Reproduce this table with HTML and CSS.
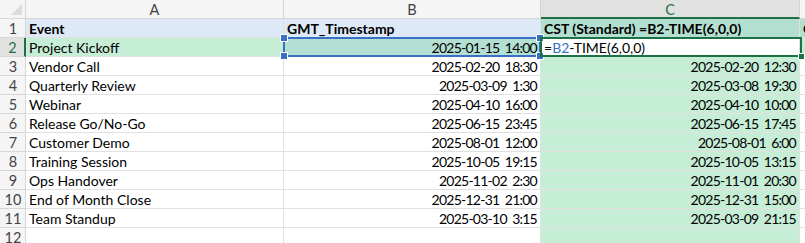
FILE: index.html
```html
<!DOCTYPE html>
<html>
<head>
<meta charset="utf-8">
<link rel="stylesheet" href="styles.css">
</head>
<body>
<div class="sheet">
  <div class="grid">
    <div class="hdr corner"><span class="tri"></span></div>
    <div class="hdr col">A</div>
    <div class="hdr col">B</div>
    <div class="hdr col col-sel">C</div>
    <div class="hdr col"></div>

    <div class="hdr row">1</div>
    <div class="cell b head-blue">Event</div>
    <div class="cell b head-blue">GMT_Timestamp</div>
    <div class="cell b head-teal">CST (Standard) =B2-TIME(6,0,0)</div>
    <div class="cell b head-teal">C</div>

    <div class="hdr row row-sel">2</div>
    <div class="cell green">Project Kickoff</div>
    <div class="cell r teal">2025-01-15 14:00</div>
    <div class="cell active"><span>=</span><span class="ref">B2</span><span>-TIME(6,0,0)</span></div>
    <div class="cell green"></div>

    <div class="hdr row">3</div>
    <div class="cell">Vendor Call</div>
    <div class="cell r">2025-02-20 18:30</div>
    <div class="cell r green">2025-02-20 12:30</div>
    <div class="cell"></div>

    <div class="hdr row">4</div>
    <div class="cell">Quarterly Review</div>
    <div class="cell r">2025-03-09 1:30</div>
    <div class="cell r green">2025-03-08 19:30</div>
    <div class="cell"></div>

    <div class="hdr row">5</div>
    <div class="cell">Webinar</div>
    <div class="cell r">2025-04-10 16:00</div>
    <div class="cell r green">2025-04-10 10:00</div>
    <div class="cell"></div>

    <div class="hdr row">6</div>
    <div class="cell">Release Go/No-Go</div>
    <div class="cell r">2025-06-15 23:45</div>
    <div class="cell r green">2025-06-15 17:45</div>
    <div class="cell"></div>

    <div class="hdr row">7</div>
    <div class="cell">Customer Demo</div>
    <div class="cell r">2025-08-01 12:00</div>
    <div class="cell r green">2025-08-01 6:00</div>
    <div class="cell"></div>

    <div class="hdr row">8</div>
    <div class="cell">Training Session</div>
    <div class="cell r">2025-10-05 19:15</div>
    <div class="cell r green">2025-10-05 13:15</div>
    <div class="cell"></div>

    <div class="hdr row">9</div>
    <div class="cell">Ops Handover</div>
    <div class="cell r">2025-11-02 2:30</div>
    <div class="cell r green">2025-11-01 20:30</div>
    <div class="cell"></div>

    <div class="hdr row">10</div>
    <div class="cell">End of Month Close</div>
    <div class="cell r">2025-12-31 21:00</div>
    <div class="cell r green">2025-12-31 15:00</div>
    <div class="cell"></div>

    <div class="hdr row">11</div>
    <div class="cell">Team Standup</div>
    <div class="cell r">2025-03-10 3:15</div>
    <div class="cell r green">2025-03-09 21:15</div>
    <div class="cell"></div>

    <div class="hdr row">12</div>
    <div class="cell"></div>
    <div class="cell"></div>
    <div class="cell green"></div>
    <div class="cell"></div>
  </div>

  <div class="ref-box">
    <span class="h tl"></span><span class="h tr"></span><span class="h bl"></span><span class="h br"></span>
  </div>
  <div class="active-box"><span class="fill"></span></div>
</div>
</body>
</html>
```

FILE: styles.css
```css
html, body {
  margin: 0;
  padding: 0;
  background: #ffffff;
  overflow: hidden;
}

.sheet {
  position: relative;
  width: 805px;
  height: 243px;
  overflow: hidden;
  font-family: Lato, "Liberation Sans", sans-serif;
  font-size: 14px;
  color: #000;
}

.grid {
  display: grid;
  grid-template-columns: 26px 258px 257px 259px 60px;
  grid-template-rows: 19px repeat(12, 19px);
}

.grid > div {
  box-sizing: border-box;
  border-right: 1px solid #e1e1e1;
  border-bottom: 1px solid #e1e1e1;
  white-space: nowrap;
  overflow: hidden;
}

.hdr {
  background: #f5f5f5;
  color: #444;
  display: flex;
  align-items: center;
  justify-content: center;
  font-size: 14.5px;
}

.grid > .hdr {
  border-right-color: #d6d6d6;
  border-bottom-color: #d6d6d6;
}

.corner {
  position: relative;
}

.tri {
  position: absolute;
  right: 3px;
  bottom: 3px;
  width: 0;
  height: 0;
  border-left: 11px solid transparent;
  border-bottom: 11px solid #dcdcdc;
}

.col {
  padding-top: 1px;
}

.grid > .col-sel {
  background: #e1e1e1;
  color: #1e7145;
  border-bottom: 2px solid #1e7145;
}

.row {
  justify-content: center;
  padding-left: 1px;
}

.grid > .row-sel {
  background: #e1e1e1;
  color: #1e7145;
  border-right: 2px solid #1e7145;
}

.cell {
  display: flex;
  align-items: flex-end;
  padding: 0 2px 0 3px;
  line-height: 17px;
}

.cell.r {
  justify-content: flex-end;
  letter-spacing: -0.75px;
  word-spacing: 2.5px;
  padding-right: 3px;
}

.b {
  font-weight: 700;
}

.head-blue {
  background: #dde9f6;
}

.head-teal {
  background: #b3dfd0;
}

.green {
  background: #c6edd6;
}

.teal {
  background: #b4e0d3;
}

.active {
  background: #ffffff;
}

.ref {
  color: #3a6fc6;
}

.ref-box {
  position: absolute;
  left: 283px;
  top: 37px;
  width: 258px;
  height: 20px;
  box-sizing: border-box;
  border: 2px solid #3a6fc6;
}

.h {
  position: absolute;
  width: 6px;
  height: 6px;
  background: #3a6fc6;
  border: 1px solid #fff;
}

.h.tl { left: -5px; top: -5px; }
.h.tr { right: -5px; top: -5px; }
.h.bl { left: -5px; bottom: -5px; }
.h.br { right: -5px; bottom: -5px; }

.active-box {
  position: absolute;
  left: 540px;
  top: 37px;
  width: 262px;
  height: 20px;
  box-sizing: border-box;
  border: 2px solid #1e7145;
}

.fill {
  position: absolute;
  right: -5px;
  bottom: -5px;
  width: 5px;
  height: 5px;
  background: #1e7145;
  border: 1px solid #fff;
}
```
